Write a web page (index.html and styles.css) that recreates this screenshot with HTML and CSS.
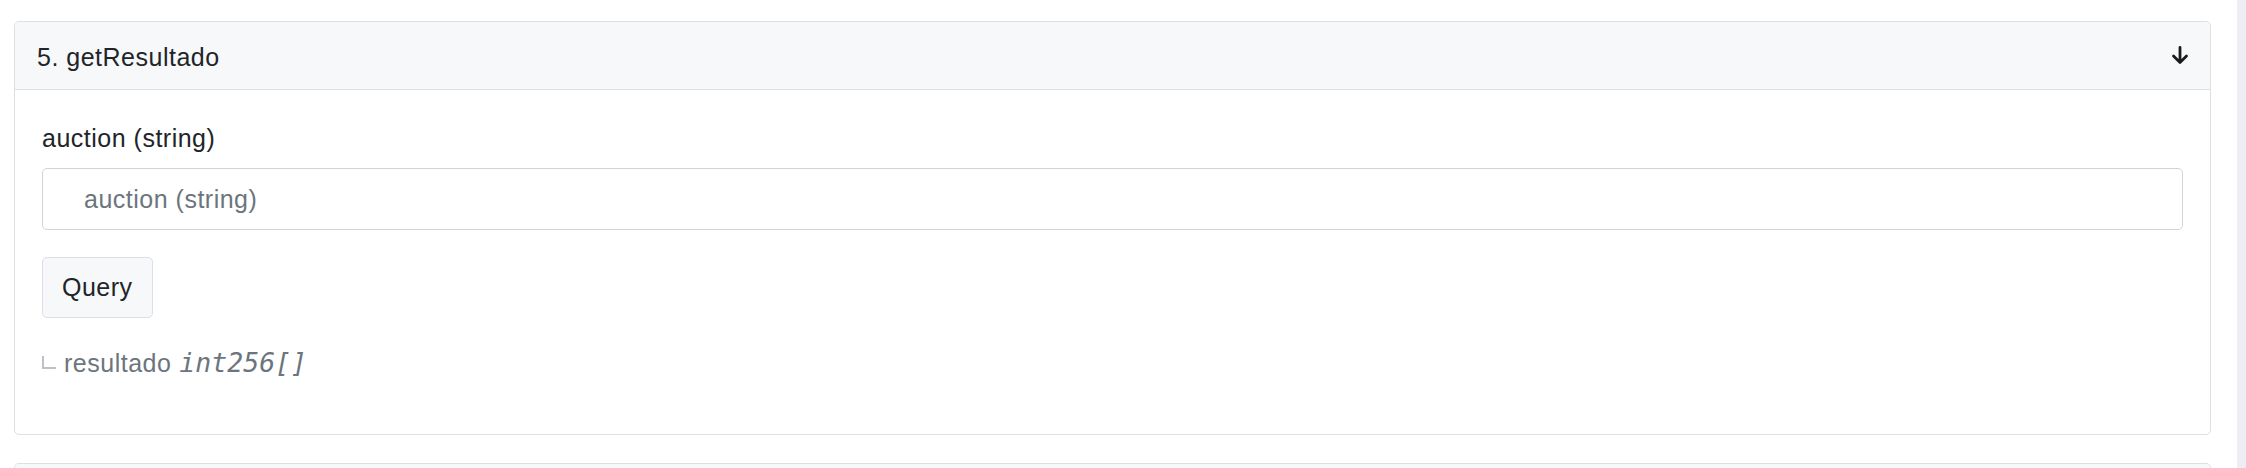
FILE: index.html
```html
<!DOCTYPE html>
<html>
<head>
<meta charset="utf-8">
<link rel="stylesheet" href="styles.css">
</head>
<body>
<div class="page">
  <main class="main">
    <section class="card">
      <header class="card-header">
        <span class="card-title">5. getResultado</span>
        <svg class="arrow" width="18" height="19" viewBox="0 0 18 19" aria-hidden="true">
          <path d="M9 1.5 V16.5 M2.5 10 L9 16.5 L15.5 10" fill="none" stroke="#1b1b1b" stroke-width="2.8" stroke-linecap="round" stroke-linejoin="round"/>
        </svg>
      </header>
      <div class="card-body">
        <label class="field-label">auction (string)</label>
        <input class="field-input" type="text" placeholder="auction (string)">
        <button class="btn" type="button">Query</button>
        <div class="result">
          <span class="corner"></span>
          <span class="result-name">resultado</span>
          <em class="result-type">int256[]</em>
        </div>
      </div>
    </section>
    <section class="card card-next">
      <header class="card-header card-header-next"></header>
    </section>
  </main>
  <aside class="side-strip"></aside>
</div>
</body>
</html>
```

FILE: styles.css
```css
html, body {
  margin: 0;
  padding: 0;
  background: #ffffff;
  height: 100%;
  overflow: hidden;
}

body {
  font-family: "Liberation Sans", Arial, sans-serif;
  color: #212529;
  font-size: 25px;
  line-height: 34px;
  letter-spacing: 0.5px;
}

.page {
  display: flex;
  height: 468px;
}

.main {
  flex: 1;
  padding: 21px 26px 0 14px;
  display: flex;
  flex-direction: column;
  gap: 28px;
}

.side-strip {
  width: 9px;
  background: #eceef3;
}

.card {
  border: 1px solid #dedfe0;
  border-radius: 5px;
  overflow: hidden;
  background: #fff;
}

.card-header {
  height: 68px;
  box-sizing: border-box;
  background: #f7f8fa;
  border-bottom: 1px solid #dedfe0;
  display: flex;
  align-items: center;
  justify-content: space-between;
  padding: 0 21px 0 22px;
}

.card-title {
  color: #212529;
  transform: translateY(1px);
}

.arrow {
  display: block;
}

.card-body {
  display: flex;
  flex-direction: column;
  align-items: flex-start;
  padding: 31px 27px 54px 27px;
}

.field-label {
  display: block;
  margin-bottom: 13px;
}

.field-input {
  width: 100%;
  box-sizing: border-box;
  height: 62px;
  border: 1px solid #ced4da;
  border-radius: 5px;
  padding: 0 0 0 41px;
  font-family: "Liberation Sans", Arial, sans-serif;
  font-size: 25px;
  letter-spacing: 0.5px;
  color: #212529;
  background: #fff;
  outline: none;
}

.field-input::placeholder {
  color: #6c757d;
  opacity: 1;
}

.btn {
  margin-top: 27px;
  height: 61px;
  box-sizing: border-box;
  padding: 0 19px;
  background: #f7f8fa;
  border: 1px solid #dcdfe3;
  border-radius: 5px;
  font-family: "Liberation Sans", Arial, sans-serif;
  font-size: 25px;
  letter-spacing: 0.5px;
  color: #212529;
  transform: translateY(0);
}

.result {
  margin-top: 28px;
  display: flex;
  align-items: baseline;
  color: #6c757d;
}

.corner {
  display: inline-block;
  width: 12px;
  height: 11px;
  border-left: 2px solid #bcc1c7;
  border-bottom: 2px solid #bcc1c7;
  margin-right: 8px;
  transform: translateY(-3px);
}

.result-name {
  margin-right: 8px;
}

.result-type {
  font-family: "DejaVu Sans Mono", "Liberation Mono", monospace;
  font-style: italic;
  font-size: 26.5px;
  letter-spacing: 0;
  color: #6c757d;
}

.card-next {
  flex: 1;
  border-bottom: none;
  border-bottom-left-radius: 0;
  border-bottom-right-radius: 0;
}

.card-header-next {
  height: 100%;
  border-bottom: none;
}
```
